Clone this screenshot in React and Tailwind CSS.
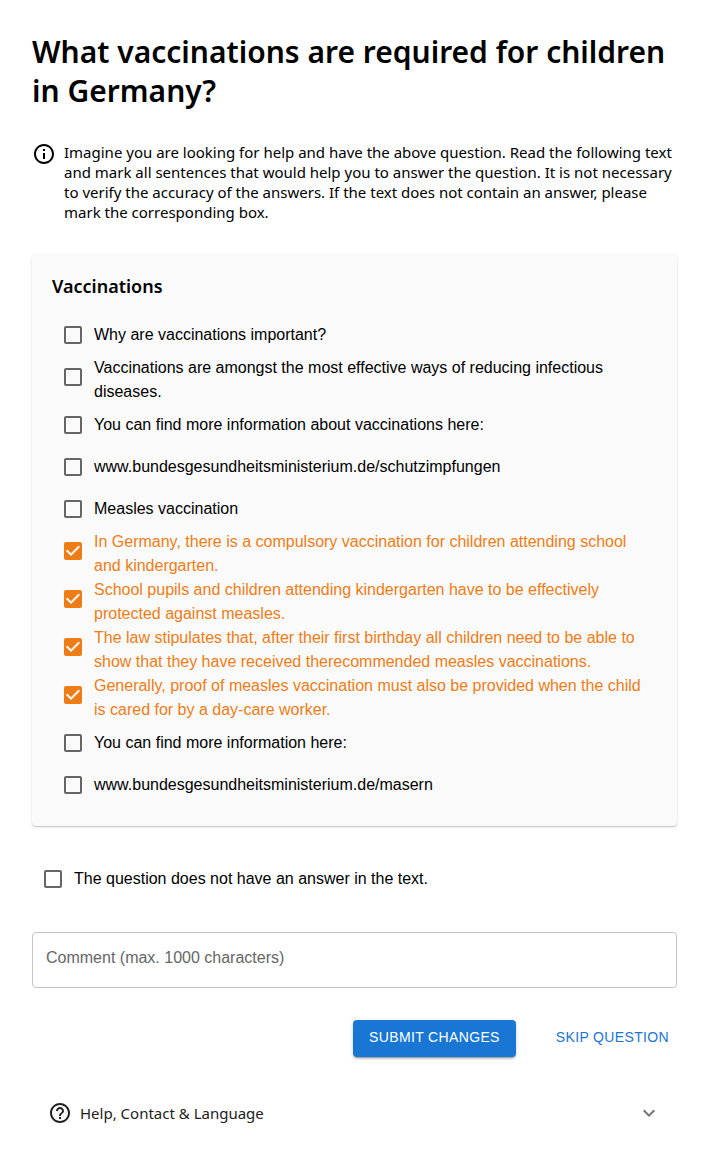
import { useState } from "react";

const SENTENCES = [
  { text: "Why are vaccinations important?", marked: false },
  { text: "Vaccinations are amongst the most effective ways of reducing infectious diseases.", marked: false },
  { text: "You can find more information about vaccinations here:", marked: false },
  { text: "www.bundesgesundheitsministerium.de/schutzimpfungen", marked: false },
  { text: "Measles vaccination", marked: false },
  { text: "In Germany, there is a compulsory vaccination for children attending school and kindergarten.", marked: true },
  { text: "School pupils and children attending kindergarten have to be effectively protected against measles.", marked: true },
  { text: "The law stipulates that, after their first birthday all children need to be able to show that they have received therecommended measles vaccinations.", marked: true },
  { text: "Generally, proof of measles vaccination must also be provided when the child is cared for by a day-care worker.", marked: true },
  { text: "You can find more information here:", marked: false },
  { text: "www.bundesgesundheitsministerium.de/masern", marked: false },
];

function Icon({ d, className }) {
  return (
    <svg viewBox="0 0 24 24" aria-hidden="true" className={"size-6 shrink-0 fill-current " + className}>
      <path d={d} />
    </svg>
  );
}

const INFO = "M11 7h2v2h-2zm0 4h2v6h-2zm1-9C6.48 2 2 6.48 2 12s4.48 10 10 10 10-4.48 10-10S17.52 2 12 2zm0 18c-4.41 0-8-3.59-8-8s3.59-8 8-8 8 3.59 8 8-3.59 8-8 8z";
const HELP = "M11 18h2v-2h-2v2zm1-16C6.48 2 2 6.48 2 12s4.48 10 10 10 10-4.48 10-10S17.52 2 12 2zm0 18c-4.41 0-8-3.59-8-8s3.59-8 8-8 8 3.59 8 8-3.59 8-8 8zm0-14c-2.21 0-4 1.79-4 4h2c0-1.1.9-2 2-2s2 .9 2 2c0 2-3 1.75-3 5h2c0-2.25 3-2.5 3-5 0-2.21-1.79-4-4-4z";
const EXPAND = "M16.59 8.59 12 13.17 7.41 8.59 6 10l6 6 6-6z";
const BOX = "M19 5v14H5V5h14m0-2H5c-1.1 0-2 .9-2 2v14c0 1.1.9 2 2 2h14c1.1 0 2-.9 2-2V5c0-1.1-.9-2-2-2z";
const BOX_CHECKED = "M19 3H5c-1.11 0-2 .9-2 2v14c0 1.1.89 2 2 2h14c1.11 0 2-.9 2-2V5c0-1.1-.89-2-2-2zm-9 14l-5-5 1.41-1.41L10 14.17l7.59-7.59L19 8l-9 9z";

function CheckRow({ text, checked, onChange }) {
  return (
    <label className={"flex cursor-pointer items-center " + (checked ? "text-[#ed7d17]" : "text-black")}>
      <span className="relative self-start p-[9px]">
        <input
          type="checkbox"
          checked={checked}
          onChange={onChange}
          className="absolute inset-0 size-full cursor-pointer opacity-0"
        />
        <Icon d={checked ? BOX_CHECKED : BOX} className={checked ? "" : "text-[#666666]"} />
      </span>
      <span className="text-base">{text}</span>
    </label>
  );
}

export default function App() {
  const [marks, setMarks] = useState(SENTENCES.map((s) => s.marked));
  const [noAnswer, setNoAnswer] = useState(false);
  const toggle = (i) => setMarks(marks.map((m, j) => (j === i ? !m : m)));

  return (
    <main className="flex flex-col gap-8 bg-white p-8 font-['Liberation_Sans',Arial,sans-serif] text-black">
      <h1 className="font-['Noto_Sans',sans-serif] text-3xl leading-[39px] font-semibold">
        What vaccinations are required for children in Germany?
      </h1>

      <div className="flex gap-2">
        <Icon d={INFO} className="" />
        <p className="font-['Noto_Sans',sans-serif] text-[15px] leading-5">
          Imagine you are looking for help and have the above question. Read the following text and mark all
          sentences that would help you to answer the question. It is not necessary to verify the accuracy of the
          answers. If the text does not contain an answer, please mark the corresponding box.
        </p>
      </div>

      <section className="rounded-sm bg-[#fafafa] py-5 pr-7 pl-5 shadow-[0_1px_1px_0_rgba(0,0,0,0.14),0_1px_3px_0_rgba(0,0,0,0.12)]">
        <h2 className="mb-4 font-['Noto_Sans',sans-serif] text-lg leading-6 font-semibold">Vaccinations</h2>
        {SENTENCES.map((s, i) => (
          <CheckRow key={s.text} text={s.text} checked={marks[i]} onChange={() => toggle(i)} />
        ))}
      </section>

      <CheckRow
        text="The question does not have an answer in the text."
        checked={noAnswer}
        onChange={() => setNoAnswer(!noAnswer)}
      />

      <input
        type="text"
        aria-label="Comment (max. 1000 characters)"
        maxLength={1000}
        placeholder="Comment (max. 1000 characters)"
        className="h-14 w-full rounded-sm border border-[#c4c4c4] px-[13px] pb-1 text-base placeholder:text-[#666666]"
      />

      <div className="flex justify-end gap-8">
        <button
          type="button"
          className="rounded-sm bg-[#1976d2] px-4 pt-1.5 pb-2 text-sm leading-[23px] tracking-wide text-white uppercase shadow-[0_3px_1px_-2px_rgba(0,0,0,0.2),0_2px_2px_0_rgba(0,0,0,0.14),0_1px_5px_0_rgba(0,0,0,0.12)]"
        >
          Submit changes
        </button>
        <button
          type="button"
          className="rounded-sm px-2 pt-1.5 pb-2 text-sm leading-[23px] tracking-wide text-[#1976d2] uppercase"
        >
          Skip question
        </button>
      </div>

      <button type="button" className="flex h-12 items-center gap-2 px-4 text-left text-[#212121]">
        <Icon d={HELP} className="" />
        <span className="grow font-['Noto_Sans',sans-serif] text-[15px] leading-5">Help, Contact &amp; Language</span>
        <Icon d={EXPAND} className="text-[#757575]" />
      </button>
    </main>
  );
}
